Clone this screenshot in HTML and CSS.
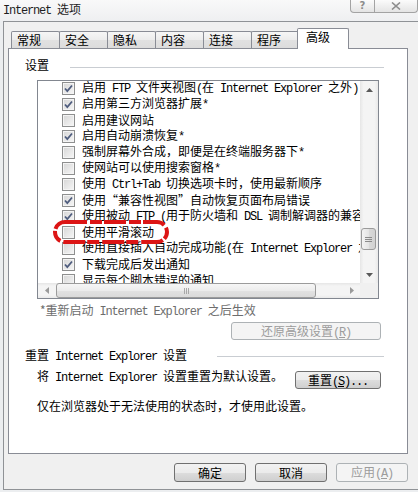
FILE: index.html
```html
<!DOCTYPE html>
<html lang="zh-CN">
<head>
    <meta charset="UTF-8">
    <title>Internet 选项</title>
    <link rel="stylesheet" href="styles.css">
</head>
<body>
    <div class="titlebar">
        <span class="title"><span class="en">Internet </span>选项</span>
        <div class="caption">
            <span class="cap-btn help">?</span>
            <span class="cap-btn close">
                <svg width="10" height="8" viewBox="0 0 10 8"><path d="M1 0.5l8 7M9 0.5l-8 7" stroke="#8c8c8c" stroke-width="1.6" fill="none"/></svg>
            </span>
        </div>
    </div>

    <div class="client">
        <div class="tabs">
            <div class="tab">常规</div>
            <div class="tab">安全</div>
            <div class="tab">隐私</div>
            <div class="tab">内容</div>
            <div class="tab">连接</div>
            <div class="tab">程序</div>
            <div class="tab active">高级</div>
        </div>

        <div class="panel">
            <div class="group-head first"><span>设置</span><i></i></div>

            <div class="listbox">
                <div class="list-items">
                    <div class="row"><span class="cb on"><svg viewBox="0 0 11 11"><path d="M2 5.5l2.3 2.6L9 2.5"/></svg></span><span class="label">启用<span class="en"> FTP </span>文件夹视图<span class="en">(</span>在<span class="en"> Internet Explorer </span>之外<span class="en">)</span></span></div>
                    <div class="row"><span class="cb on"><svg viewBox="0 0 11 11"><path d="M2 5.5l2.3 2.6L9 2.5"/></svg></span><span class="label">启用第三方浏览器扩展<span class="en">*</span></span></div>
                    <div class="row"><span class="cb"></span><span class="label">启用建议网站</span></div>
                    <div class="row"><span class="cb on"><svg viewBox="0 0 11 11"><path d="M2 5.5l2.3 2.6L9 2.5"/></svg></span><span class="label">启用自动崩溃恢复<span class="en">*</span></span></div>
                    <div class="row"><span class="cb"></span><span class="label">强制屏幕外合成，即便是在终端服务器下<span class="en">*</span></span></div>
                    <div class="row"><span class="cb"></span><span class="label">使网站可以使用搜索窗格<span class="en">*</span></span></div>
                    <div class="row"><span class="cb"></span><span class="label">使用<span class="en"> Ctrl+Tab </span>切换选项卡时，使用最新顺序</span></div>
                    <div class="row"><span class="cb on"><svg viewBox="0 0 11 11"><path d="M2 5.5l2.3 2.6L9 2.5"/></svg></span><span class="label">使用“兼容性视图”自动恢复页面布局错误</span></div>
                    <div class="row"><span class="cb on"><svg viewBox="0 0 11 11"><path d="M2 5.5l2.3 2.6L9 2.5"/></svg></span><span class="label">使用被动<span class="en"> FTP (</span>用于防火墙和<span class="en"> DSL </span>调制解调器的兼容性<span class="en">)</span></span></div>
                    <div class="row"><span class="cb"></span><span class="label">使用平滑滚动</span></div>
                    <div class="row"><span class="cb"></span><span class="label">使用直接插入自动完成功能<span class="en">(</span>在<span class="en"> Internet Explorer </span>之外和<span class="en"> Windows </span>资源管理器中<span class="en">)</span></span></div>
                    <div class="row"><span class="cb on"><svg viewBox="0 0 11 11"><path d="M2 5.5l2.3 2.6L9 2.5"/></svg></span><span class="label">下载完成后发出通知</span></div>
                    <div class="row"><span class="cb"></span><span class="label">显示每个脚本错误的通知</span></div>
                </div>

                <div class="vscroll">
                    <div class="sb-btn"><svg width="7" height="4" viewBox="0 0 7 4"><path d="M0 4L3.5 0 7 4z" fill="#595959"/></svg></div>
                    <div class="vtrack"><div class="vthumb"><b></b><b></b><b></b></div></div>
                    <div class="sb-btn"><svg width="7" height="4" viewBox="0 0 7 4"><path d="M0 0L3.5 4 7 0z" fill="#595959"/></svg></div>
                </div>

                <div class="hscroll">
                    <div class="sb-btn"><svg width="4" height="7" viewBox="0 0 4 7"><path d="M4 0L0 3.5 4 7z" fill="#9a9a9a"/></svg></div>
                    <div class="htrack"><div class="hthumb"><b></b><b></b><b></b></div></div>
                    <div class="sb-btn"><svg width="4" height="7" viewBox="0 0 4 7"><path d="M0 0L4 3.5 0 7z" fill="#9a9a9a"/></svg></div>
                </div>
                <div class="corner"></div>

                <!-- red marker round the smooth-scrolling item -->
                <svg class="marker" width="116" height="24" viewBox="0 0 116 24">
                    <rect x="2" y="2" width="112" height="20" rx="10" fill="none" stroke="#dc1515" stroke-width="4" stroke-dasharray="22 3 12 2"/>
                </svg>
            </div>

            <div class="note">*重新启动<span class="en"> Internet Explorer </span>之后生效</div>
            <button class="btn restore" disabled>还原高级设置<span class="en">(<u>R</u>)</span></button>

            <div class="group-head second"><span>重置<span class="en"> Internet Explorer </span>设置</span><i></i></div>
            <div class="reset-row">
                <span class="reset-text">将<span class="en"> Internet Explorer </span>设置重置为默认设置。</span>
                <button class="btn reset">重置<span class="en">(<u>S</u>)...</span></button>
            </div>
            <div class="hint">仅在浏览器处于无法使用的状态时，才使用此设置。</div>
        </div>

        <div class="dialog-buttons">
            <button class="btn">确定</button>
            <button class="btn">取消</button>
            <button class="btn" disabled>应用<span class="en">(<u>A</u>)</span></button>
        </div>
    </div>
</body>
</html>
```

FILE: styles.css
```css
* {
    box-sizing: border-box;
}
html, body {
    margin: 0;
}
body {
    width: 418px;
    height: 492px;
    overflow: hidden;
    background: #eceef0;
    font-family: "Noto Sans CJK SC", sans-serif;
    font-size: 12px;
    line-height: 16px;
    color: #000;
}
.en {
    font-family: "Liberation Mono", "Noto Sans CJK SC", monospace;
    letter-spacing: -1.2px;
}
u {
    text-decoration: underline;
}

/* title bar */
.titlebar {
    height: 21px;
    display: flex;
    align-items: flex-start;
    background: linear-gradient(#f9f9f9, #eeeff1);
}
.title {
    padding-left: 3px;
    line-height: 17px;
    color: #1e1e1e;
    white-space: pre;
}
.caption {
    margin-left: auto;
    display: flex;
}
.cap-btn {
    height: 13px;
    display: flex;
    align-items: center;
    justify-content: center;
    border: 1px solid #a3a3a3;
    border-top: none;
    background: linear-gradient(#fbfbfb, #e4e4e4);
    color: #8c8c8c;
    font-family: "DejaVu Sans", sans-serif;
    font-size: 10px;
    font-weight: bold;
    line-height: 12px;
}
.cap-btn.help {
    width: 25px;
    border-radius: 0 0 0 4px;
}
.cap-btn.close {
    width: 43px;
    border-left: none;
    border-radius: 0 0 4px 0;
}

/* client area */
.client {
    margin-left: 3px;
    width: 420px;
    height: 469px;
    border: 1px solid #8f9296;
    background: #f0f0f0;
    padding: 6px 0 0 4px;
}
.tabs {
    position: relative;
    z-index: 1;
    display: flex;
    height: 21px;
    margin-bottom: -1px;
    padding-left: 3px;
}
.tab {
    width: 49px;
    height: 17px;
    margin-top: 3px;
    margin-left: -1px;
    padding-left: 5px;
    border: 1px solid #898c95;
    border-bottom: none;
    border-radius: 2px 2px 0 0;
    background: linear-gradient(#f6f6f6, #ececec 50%, #e1e1e1 51%, #dcdcdc);
    line-height: 16px;
}
.tab:first-child {
    margin-left: 0;
}
.tab.active {
    width: 52px;
    height: 21px;
    margin-top: 0;
    margin-left: -3px;
    padding-left: 8px;
    background: #fff;
}
.panel {
    width: 400px;
    height: 406px;
    border: 1px solid #898c95;
    background: #fff;
}

/* group headings */
.group-head {
    display: flex;
    align-items: center;
    margin: 8px 23px 0 16px;
    white-space: pre;
}
.group-head i {
    flex: 1;
    height: 1px;
    margin-top: 5px;
    background: #c9cdd2;
}
.group-head.first i {
    margin-left: 21px;
}
.group-head.second {
    margin-top: 7px;
}
.group-head.second i {
    margin-left: 30px;
    margin-top: 0;
}

/* settings list */
.listbox {
    position: relative;
    margin: 7px 0 0 28px;
    width: 342px;
    height: 219px;
    border: 1px solid #828790;
    display: grid;
    grid-template-columns: 322px 18px;
    grid-template-rows: 202px 15px;
}
.list-items {
    overflow: hidden;
    background: #fff;
}
.row {
    display: flex;
    align-items: center;
    height: 16px;
    padding-left: 24px;
    white-space: pre;
}
.row:first-child {
    margin-top: -1px;
}
.cb {
    flex: none;
    width: 13px;
    height: 13px;
    margin-right: 7px;
    border: 1px solid #8e8f8f;
    box-shadow: inset 0 0 0 1px #f4f4f4;
    background: linear-gradient(135deg, #d6d6d6, #f7f7f7);
    display: flex;
    align-items: center;
    justify-content: center;
}
.cb svg {
    width: 11px;
    height: 11px;
}
.cb path {
    fill: none;
    stroke: #4f5d7e;
    stroke-width: 1.8;
}
.vscroll, .hscroll {
    display: flex;
    background: linear-gradient(90deg, #e6e6e6, #f4f4f4 20%, #f4f4f4 80%, #e9e9e9);
}
.vscroll {
    flex-direction: column;
}
.hscroll {
    background: linear-gradient(#e6e6e6, #f4f4f4 20%, #f4f4f4 80%, #e9e9e9);
}
.sb-btn {
    flex: none;
    width: 17px;
    height: 17px;
    display: flex;
    align-items: center;
    justify-content: center;
}
.vscroll .sb-btn {
    width: auto;
}
.hscroll .sb-btn {
    height: auto;
}
.vtrack {
    flex: 1;
    padding: 130px 2px 0 1px;
}
.vthumb, .hthumb {
    display: flex;
    align-items: center;
    justify-content: center;
    gap: 1px;
    border: 1px solid #9b9b9b;
    border-radius: 3px;
}
.vthumb {
    flex-direction: column;
    height: 22px;
    background: linear-gradient(90deg, #f3f3f3, #e4e4e4 50%, #d9d9d9 51%, #d2d2d2);
}
.vthumb b {
    width: 7px;
    height: 1px;
    background: #8a8a8a;
}
.htrack {
    flex: 1;
    padding: 0 0 0 1px;
}
.hthumb {
    width: 260px;
    height: 100%;
    background: linear-gradient(#f6f6f6, #ececec 50%, #e2e2e2 51%, #dadada);
}
.hthumb b {
    width: 1px;
    height: 6px;
    background: #a8a8a8;
}
.corner {
    background: #f0f0f0;
}
.marker {
    position: absolute;
    left: 15px;
    top: 139px;
}

/* below the list */
.note {
    margin: 3px 0 0 31px;
    color: #6d6d6d;
    white-space: pre;
}
.btn {
    font-family: "Noto Sans CJK SC", sans-serif;
    font-size: 12px;
    line-height: 15px;
    height: 19px;
    padding: 0;
    border: 1px solid #707070;
    border-radius: 3px;
    background: linear-gradient(#f2f2f2, #ebebeb 50%, #dddddd 51%, #cfcfcf);
    color: #000;
}
.btn:disabled {
    border-color: #adb2b5;
    background: #f4f4f4;
    color: #9c9c9c;
}
.restore {
    display: block;
    width: 150px;
    height: 18px;
    margin: 2px 0 0 222px;
}
.reset-row {
    display: flex;
    align-items: flex-start;
    margin: 3px 0 0 28px;
    white-space: pre;
}
.reset {
    width: 86px;
    height: 18px;
    margin: 3px 0 0 auto;
    margin-right: 26px;
}
.hint {
    margin: 9px 0 0 28px;
}
.dialog-buttons {
    width: 400px;
    display: flex;
    justify-content: flex-end;
    gap: 9px;
    margin-top: 9px;
}
.dialog-buttons .btn {
    width: 72px;
}
```
